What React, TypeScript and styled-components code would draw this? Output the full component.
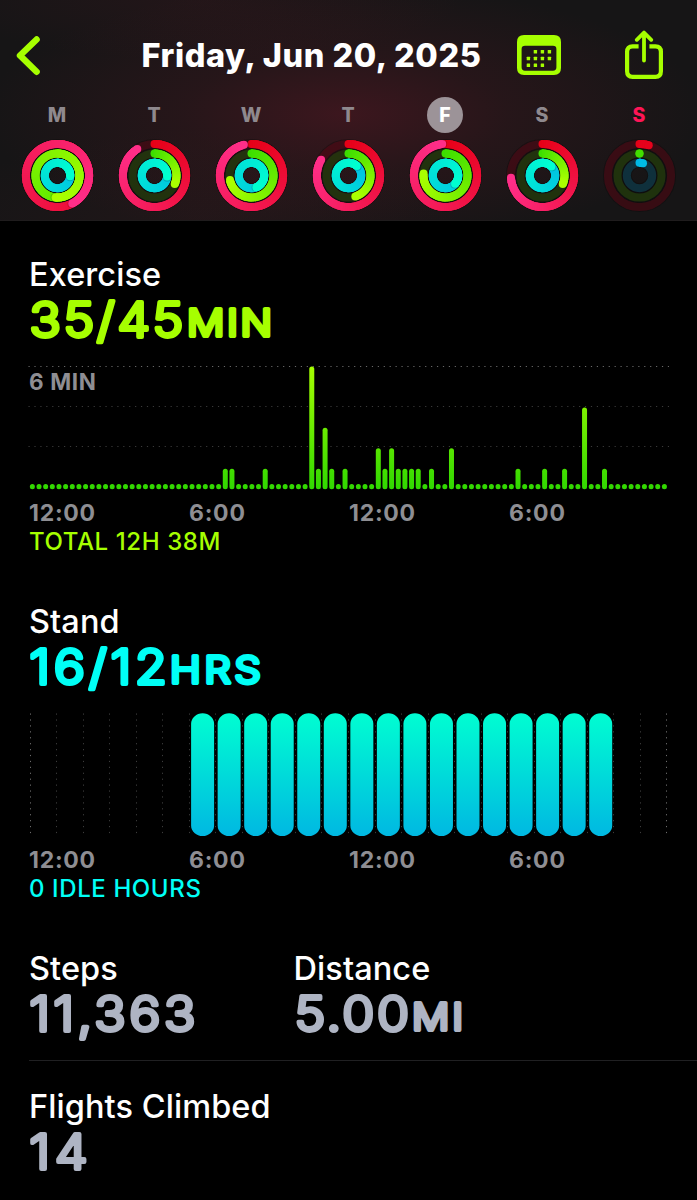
import React from "react";
import styled, { createGlobalStyle } from "styled-components";

const LIME = "#a6ff00";
const AQUA = "#00fff6";
const GREY = "#8e8e93";
const SILVER = "#aeb4c3";

const GlobalStyle = createGlobalStyle`
  html, body { margin: 0; background: #000; }
  body {
    font-family: Inter, "Liberation Sans", sans-serif;
    color: #fff;
    -webkit-font-smoothing: antialiased;
  }
`;

const Page = styled.div`
  width: 697px;
  height: 1200px;
  overflow: hidden;
  background: #000;
  display: flex;
  flex-direction: column;
`;

const Header = styled.header`
  box-sizing: border-box;
  height: 221px;
  flex: none;
  display: flex;
  flex-direction: column;
  border-bottom: 1px solid #1f1c1d;
  background:
    radial-gradient(ellipse 360px 130px at 345px 114px, rgba(98, 24, 38, 0.5), rgba(80, 24, 34, 0.28) 45%, transparent),
    radial-gradient(ellipse 260px 60px at 200px 0px, rgba(80, 24, 34, 0.22), transparent),
    radial-gradient(ellipse 260px 90px at 200px 220px, rgba(70, 28, 34, 0.22), transparent),
    #161516;
`;

const NavBar = styled.div`
  display: flex;
  align-items: center;
  height: 67px;
  padding: 22px 31px 0 14px;
`;

const Title = styled.h1`
  margin: 0 0 0 97.5px;
  width: 375.5px;
  font-size: 32.5px;
  line-height: 42px;
  padding-top: 1px;
  font-weight: 800;
  white-space: nowrap;
  letter-spacing: 0.55px;
`;

const IconButton = styled.button<{ $gap?: number }>`
  display: block;
  flex: none;
  padding: 0;
  margin: 0 0 0 ${(p) => p.$gap ?? 0}px;
  border: 0;
  background: none;
  line-height: 0;
`;

const Week = styled.div`
  display: flex;
  padding: 8px 0 0 8.5px;
`;

const Day = styled.div`
  width: 97px;
  flex: none;
  display: flex;
  flex-direction: column;
  align-items: center;
`;

const DayLetter = styled.span<{ $color: string; $selected?: boolean }>`
  width: 36px;
  height: 36px;
  border-radius: 50%;
  text-align: center;
  font-size: 19.5px;
  line-height: 36px;
  font-weight: 800;
  color: ${(p) => p.$color};
  background: ${(p) => (p.$selected ? "#9c9398" : "transparent")};
  margin-bottom: 5px;
`;

const Content = styled.main`
  padding: 35px 0 0 29px;
`;

const Metric = styled.section<{ $width?: number; $gap?: number }>`
  display: flex;
  flex-direction: column;
  width: ${(p) => (p.$width ? `${p.$width}px` : "auto")};
  margin-bottom: ${(p) => p.$gap ?? 0}px;
`;

const Label = styled.h2`
  margin: 0;
  font-size: 32.5px;
  line-height: 37px;
  font-weight: 550;
  letter-spacing: 0.08px;
  white-space: nowrap;
`;

const ValueCanvas = styled.svg`
  display: block;
  overflow: visible;
  font-family: Inter, "Liberation Sans", sans-serif;
  font-weight: 300;
  stroke-linejoin: round;
  stroke-linecap: round;
`;

const Chart = styled.svg`
  display: block;
  overflow: visible;
  margin-top: 14px;
`;

const ChartCaption = styled.text`
  font-size: 22.5px;
  font-weight: 700;
  letter-spacing: 0.65px;
  fill: ${GREY};
`;

const Axis = styled.div`
  display: grid;
  grid-template-columns: repeat(4, 160px);
  font-size: 23px;
  line-height: 38px;
  font-weight: 750;
  color: ${GREY};
  letter-spacing: 0.75px;
`;

const Total = styled.div<{ $color: string }>`
  font-size: 24px;
  line-height: 19px;
  font-weight: 500;
  letter-spacing: 0.6px;
  color: ${(p) => p.$color};
`;

const StatRow = styled.div`
  display: flex;
  height: 110px;
  margin-bottom: 26.5px;
  border-bottom: 1px solid #202022;
`;

type Rgb = [number, number, number];

const mix = (a: Rgb, b: Rgb, t: number) =>
  `rgb(${a.map((v, i) => Math.round(v + (b[i] - v) * t)).join(",")})`;

const point = (r: number, deg: number) => {
  const a = ((deg - 90) * Math.PI) / 180;
  return [r * Math.cos(a), r * Math.sin(a)];
};

const RING_KINDS: { r: number; from: Rgb; to: Rgb; track: string }[] = [
  { r: 31.6, from: [230, 0, 22], to: [255, 46, 136], track: "rgba(110,8,24,0.42)" },
  { r: 22, from: [60, 222, 0], to: [170, 255, 0], track: "rgba(38,66,12,0.68)" },
  { r: 12.7, from: [0, 184, 230], to: [0, 255, 208], track: "rgba(14,62,78,0.7)" },
];

function Arc({ r, from, to, track, sweep }: { r: number; from: Rgb; to: Rgb; track: string; sweep: number }) {
  const step = 4;
  const count = Math.max(1, Math.ceil(sweep / step));
  const segments = Array.from({ length: count }, (_, i) => {
    const a0 = i * step;
    const a1 = Math.min(sweep, a0 + step);
    const [x0, y0] = point(r, i ? a0 - 6 : a0 - 1);
    const [x1, y1] = point(r, a1);
    return (
      <path
        key={i}
        d={`M${x0} ${y0}A${r} ${r} 0 0 1 ${x1} ${y1}`}
        stroke={mix(from, to, sweep < 40 ? 0.05 : a1 / sweep)}
      />
    );
  });
  const [sx, sy] = point(r, 0);
  const [ex, ey] = point(r, sweep);
  const [hx, hy] = point(r, sweep + 60 / r);
  const tail = Math.max(0, segments.length - 6);
  return (
    <g fill="none" strokeWidth={8}>
      <circle r={r} stroke="rgba(8,8,8,0.35)" strokeWidth={9.8} />
      <circle r={r} stroke={track} />
      <circle cx={sx} cy={sy} r={4} fill={mix(from, to, 0)} />
      {segments.slice(0, tail)}
      {sweep > 345 && <circle cx={hx} cy={hy} r={4} fill="rgba(0,0,0,0.16)" />}
      {segments.slice(tail)}
      <circle cx={ex} cy={ey} r={4} fill={mix(from, to, sweep < 40 ? 0.05 : 1)} />
    </g>
  );
}

const WEEK = [
  { letter: "M", sweeps: [512, 545, 453] },
  { letter: "T", sweeps: [327, 113, 455] },
  { letter: "W", sweeps: [346, 258, 517] },
  { letter: "T", sweeps: [300, 162, 401] },
  { letter: "F", sweeps: [354, 275, 491], selected: true },
  { letter: "S", sweeps: [266, 113, 405] },
  { letter: "S", sweeps: [17, 0, 16], today: true },
];

function Rings({ sweeps }: { sweeps: number[] }) {
  return (
    <svg width="75" height="75" viewBox="-37.5 -37.5 75 75">
      {RING_KINDS.map((kind, i) => (
        <Arc key={i} {...kind} sweep={sweeps[i]} />
      ))}
    </svg>
  );
}

function Value({ amount, unit, color, unitX = 0, track = 0, unitTrack = 0 }: {
  amount: string; unit?: string; color: string; unitX?: number; track?: number; unitTrack?: number;
}) {
  return (
    <ValueCanvas width="260" height="53" fill={color} stroke={color}>
      <text transform="translate(0.5 43.6) scale(1.09 1)" fontSize="47.5" strokeWidth="3.9" letterSpacing={track}>
        {amount}
      </text>
      {unit && (
        <text transform={`translate(${unitX} 43.4) scale(1.12 1)`} fontSize="37" strokeWidth="4.1" letterSpacing={unitTrack}>
          {unit}
        </text>
      )}
    </ValueCanvas>
  );
}

const MINUTES: Record<number, number> = {
  29: 1, 30: 1, 35: 1, 42: 6, 43: 1, 44: 3, 45: 1, 47: 1, 52: 2, 53: 1, 54: 2, 55: 1, 56: 1,
  57: 1, 58: 1, 60: 1, 63: 2, 73: 1, 77: 1, 80: 1, 83: 4, 86: 1,
};

function ExerciseChart() {
  return (
    <Chart width="640" height="134">
      <defs>
        <linearGradient id="minutes" gradientUnits="userSpaceOnUse" x1="0" y1="129" x2="0" y2="6">
          <stop offset="0" stopColor="#30d800" />
          <stop offset="1" stopColor="#a6ff00" />
        </linearGradient>
      </defs>
      {[6.5, 46.5, 86.5].map((y, i) => (
        <line key={y} x1="-0.5" x2="640" y1={y} y2={y} stroke={i ? "#3a3a3a" : "#686868"} strokeDasharray="1.2 4.72" />
      ))}
      <ChartCaption x="0" y="29.6">6 MIN</ChartCaption>
      {Array.from({ length: 96 }, (_, i) => {
        const h = MINUTES[i] ? MINUTES[i] * 20.45 : 5.2;
        return (
          <rect key={i} x={0.85 + i * 6.653} y={129.2 - h} width="5" height={h} rx="2.5" fill="url(#minutes)" />
        );
      })}
    </Chart>
  );
}

function StandChart() {
  return (
    <Chart width="640" height="134">
      <defs>
        <linearGradient id="hours" x1="0" y1="0" x2="0" y2="1">
          <stop offset="0.04" stopColor="#00fbd2" />
          <stop offset="1" stopColor="#00b8e2" />
        </linearGradient>
      </defs>
      {Array.from({ length: 25 }, (_, i) => {
        const x = Math.round(0.5 + i * 26.54) + 0.5;
        return (
          <line key={i} x1={x} x2={x} y1="6.5" y2="127" stroke={i % 24 ? "#3c3c3c" : "#6c6c6c"} strokeDasharray="1.2 4.72" />
        );
      })}
      {Array.from({ length: 16 }, (_, i) => (
        <rect key={i} x={162.1 + i * 26.54} y="6.3" width="23" height="122.7" rx="11.5" ry="10.5" fill="url(#hours)" />
      ))}
    </Chart>
  );
}

function TimeAxis() {
  return (
    <Axis>
      <span>12:00</span>
      <span>6:00</span>
      <span>12:00</span>
      <span>6:00</span>
    </Axis>
  );
}

const CALENDAR_DOTS = [[1, 0], [2, 0], [3, 0], [0, 1], [1, 1], [2, 1], [3, 1], [0, 2], [1, 2], [2, 2]];

export default function App() {
  return (
    <Page>
      <GlobalStyle />
      <Header>
        <NavBar>
          <IconButton aria-label="Back">
            <svg width="30" height="46" fill="none" stroke={LIME} strokeWidth="6.4" strokeLinecap="round" strokeLinejoin="round">
              <path d="M22.6 6.5L6 22.5L22.6 38.8" />
            </svg>
          </IconButton>
          <Title>Friday, Jun 20, 2025</Title>
          <IconButton aria-label="Calendar">
            <svg width="44" height="42" fill={LIME}>
              <path fillRule="evenodd" d="M7 0H37Q44 0 44 7V33Q44 40 37 40H7Q0 40 0 33V7Q0 0 7 0ZM8 10.7Q4.6 10.7 4.6 14V32.3Q4.6 35.7 8 35.7H36Q39.4 35.7 39.4 32.3V14Q39.4 10.7 36 10.7Z" />
              {CALENDAR_DOTS.map(([c, r]) => (
                <rect key={`${c}${r}`} x={9.7 + c * 7} y={15 + r * 6.8} width="3.4" height="3.4" rx="0.5" />
              ))}
            </svg>
          </IconButton>
          <IconButton aria-label="Share" $gap={63}>
            <svg width="40" height="52" fill="none" stroke={LIME} strokeWidth="4.2" strokeLinecap="round" strokeLinejoin="round">
              <path strokeLinecap="butt" d="M14.6 16.3H8.6Q3.1 16.3 3.1 21.8V41.3Q3.1 46.8 8.6 46.8H31.4Q36.9 46.8 36.9 41.3V21.8Q36.9 16.3 31.4 16.3H25.4" />
              <path strokeWidth="3.8" d="M20 3V30.5M12.8 9.8L20 2.6L27.2 9.8" />
            </svg>
          </IconButton>
        </NavBar>
        <Week>
          {WEEK.map((day, i) => (
            <Day key={i}>
              <DayLetter $selected={day.selected} $color={day.selected ? "#fff" : day.today ? "#ff1556" : "#8f898e"}>
                {day.letter}
              </DayLetter>
              <Rings sweeps={day.sweeps} />
            </Day>
          ))}
        </Week>
      </Header>
      <Content>
        <Metric $gap={52}>
          <Label>Exercise</Label>
          <Value amount="35/45" track={2.4} unit="MIN" unitX={158} unitTrack={2.4} color={LIME} />
          <ExerciseChart />
          <TimeAxis />
          <Total $color={LIME}>TOTAL 12H 38M</Total>
        </Metric>
        <Metric $gap={52}>
          <Label>Stand</Label>
          <Value amount="16/12" track={3.6} unit="HRS" unitX={141} unitTrack={3.4} color={AQUA} />
          <StandChart />
          <TimeAxis />
          <Total $color={AQUA}>0 IDLE HOURS</Total>
        </Metric>
        <StatRow>
          <Metric $width={264.5}>
            <Label>Steps</Label>
            <Value amount="11,363" track={3.3} color={SILVER} />
          </Metric>
          <Metric>
            <Label>Distance</Label>
            <Value amount="5.00" track={2.4} unit="MI" unitX={118} unitTrack={2.6} color={SILVER} />
          </Metric>
        </StatRow>
        <Metric>
          <Label>Flights Climbed</Label>
          <Value amount="14" track={4.8} color={SILVER} />
        </Metric>
      </Content>
    </Page>
  );
}
